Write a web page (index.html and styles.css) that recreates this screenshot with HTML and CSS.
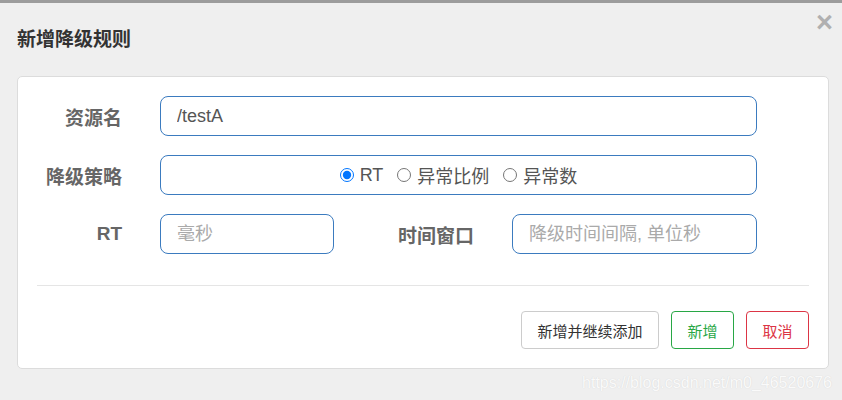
FILE: index.html
```html
<!DOCTYPE html>
<html lang="zh">
<head>
<meta charset="utf-8">
<title>新增降级规则</title>
<link rel="stylesheet" href="styles.css">
</head>
<body>
<div class="topbar"></div>
<div class="header">
  <h4 class="title">新增降级规则</h4>
  <span class="close">&times;</span>
</div>
<div class="panel">
  <div class="row">
    <label class="label">资源名</label>
    <input class="field wide" type="text" value="/testA">
  </div>
  <div class="row">
    <label class="label">降级策略</label>
    <div class="field wide radios">
      <label class="opt"><input type="radio" name="grade" checked> RT</label>
      <label class="opt"><input type="radio" name="grade"> 异常比例</label>
      <label class="opt"><input type="radio" name="grade"> 异常数</label>
    </div>
  </div>
  <div class="row">
    <label class="label">RT</label>
    <input class="field short" type="text" placeholder="毫秒">
    <label class="label label2">时间窗口</label>
    <input class="field mid" type="text" placeholder="降级时间间隔, 单位秒">
  </div>
  <hr class="divider">
  <div class="actions">
    <button class="btn btn-default">新增并继续添加</button>
    <button class="btn btn-success">新增</button>
    <button class="btn btn-danger">取消</button>
  </div>
</div>
<div class="watermark">https://blog.csdn.net/m0_46520676</div>
</body>
</html>
```
FILE: styles.css
```css
html, body {
  margin: 0;
  padding: 0;
}
body {
  background: #efefef;
  width: 842px;
  height: 400px;
  overflow: hidden;
  position: relative;
  font-family: "Liberation Sans", "Noto Sans CJK SC", sans-serif;
  color: #333;
}
.topbar {
  height: 3px;
  background: #9c9c9c;
}
.header {
  display: flex;
  justify-content: space-between;
  height: 68px;
  padding: 0 9px 5px 17px;
}
.title {
  align-self: center;
  margin: 0;
  font-size: 19px;
  font-weight: bold;
  color: #333;
}
.close {
  align-self: flex-start;
  margin-top: 5px;
  font-size: 29px;
  font-weight: bold;
  color: #b0b0b0;
  line-height: 1;
}
.panel {
  margin: 0 13px 0 17px;
  background: #fff;
  border: 1px solid #dcdcdc;
  border-radius: 5px;
  padding: 19px 19px 0 19px;
  box-sizing: border-box;
  height: 293px;
}
.row {
  display: flex;
  align-items: center;
  height: 40px;
  margin-bottom: 19px;
}
.row:nth-child(3) {
  margin-bottom: 0;
}
.label {
  width: 85px;
  flex: none;
  text-align: right;
  font-size: 19px;
  font-weight: bold;
  color: #666;
  margin-right: 38px;
}
.label2 {
  width: 140px;
  margin-right: 38px;
}
.field {
  box-sizing: border-box;
  height: 40px;
  border: 1px solid #3b7bbf;
  border-radius: 8px;
  padding: 0 16px;
  font-family: "Liberation Sans", "Noto Sans CJK SC", sans-serif;
  font-size: 18px;
  color: #555;
  background: #fff;
  outline: none;
  margin: 0;
}
.field::placeholder {
  color: #aaa;
}
.wide { width: 597px; }
.short { width: 174px; }
.mid { width: 245px; }
.radios {
  display: flex;
  align-items: center;
  justify-content: center;
  gap: 14px;
}
.opt {
  display: flex;
  align-items: center;
  font-size: 18px;
  color: #555;
}
.opt input {
  margin: 0 6px 0 0;
  width: 14px;
  height: 14px;
}
.divider {
  border: 0;
  border-top: 1px solid #e5e5e5;
  margin: 31px 0 0 0;
  width: 772px;
}
.actions {
  display: flex;
  justify-content: flex-end;
  gap: 12px;
  margin-top: 25px;
}
.btn {
  box-sizing: border-box;
  height: 38px;
  background: #fff;
  border: 1px solid #ccc;
  border-radius: 4px;
  font-family: "Liberation Sans", "Noto Sans CJK SC", sans-serif;
  font-size: 15px;
  padding: 0;
}
.btn-default {
  width: 138px;
  color: #333;
}
.btn-success {
  width: 63px;
  color: #28a745;
  border-color: #28a745;
}
.btn-danger {
  width: 63px;
  color: #dc3545;
  border-color: #dc3545;
}
.watermark {
  position: absolute;
  right: 10px;
  bottom: 8px;
  font-size: 16px;
  color: #fafafa;
  text-shadow: 0 0 1px #d0d0d0;
}
```
